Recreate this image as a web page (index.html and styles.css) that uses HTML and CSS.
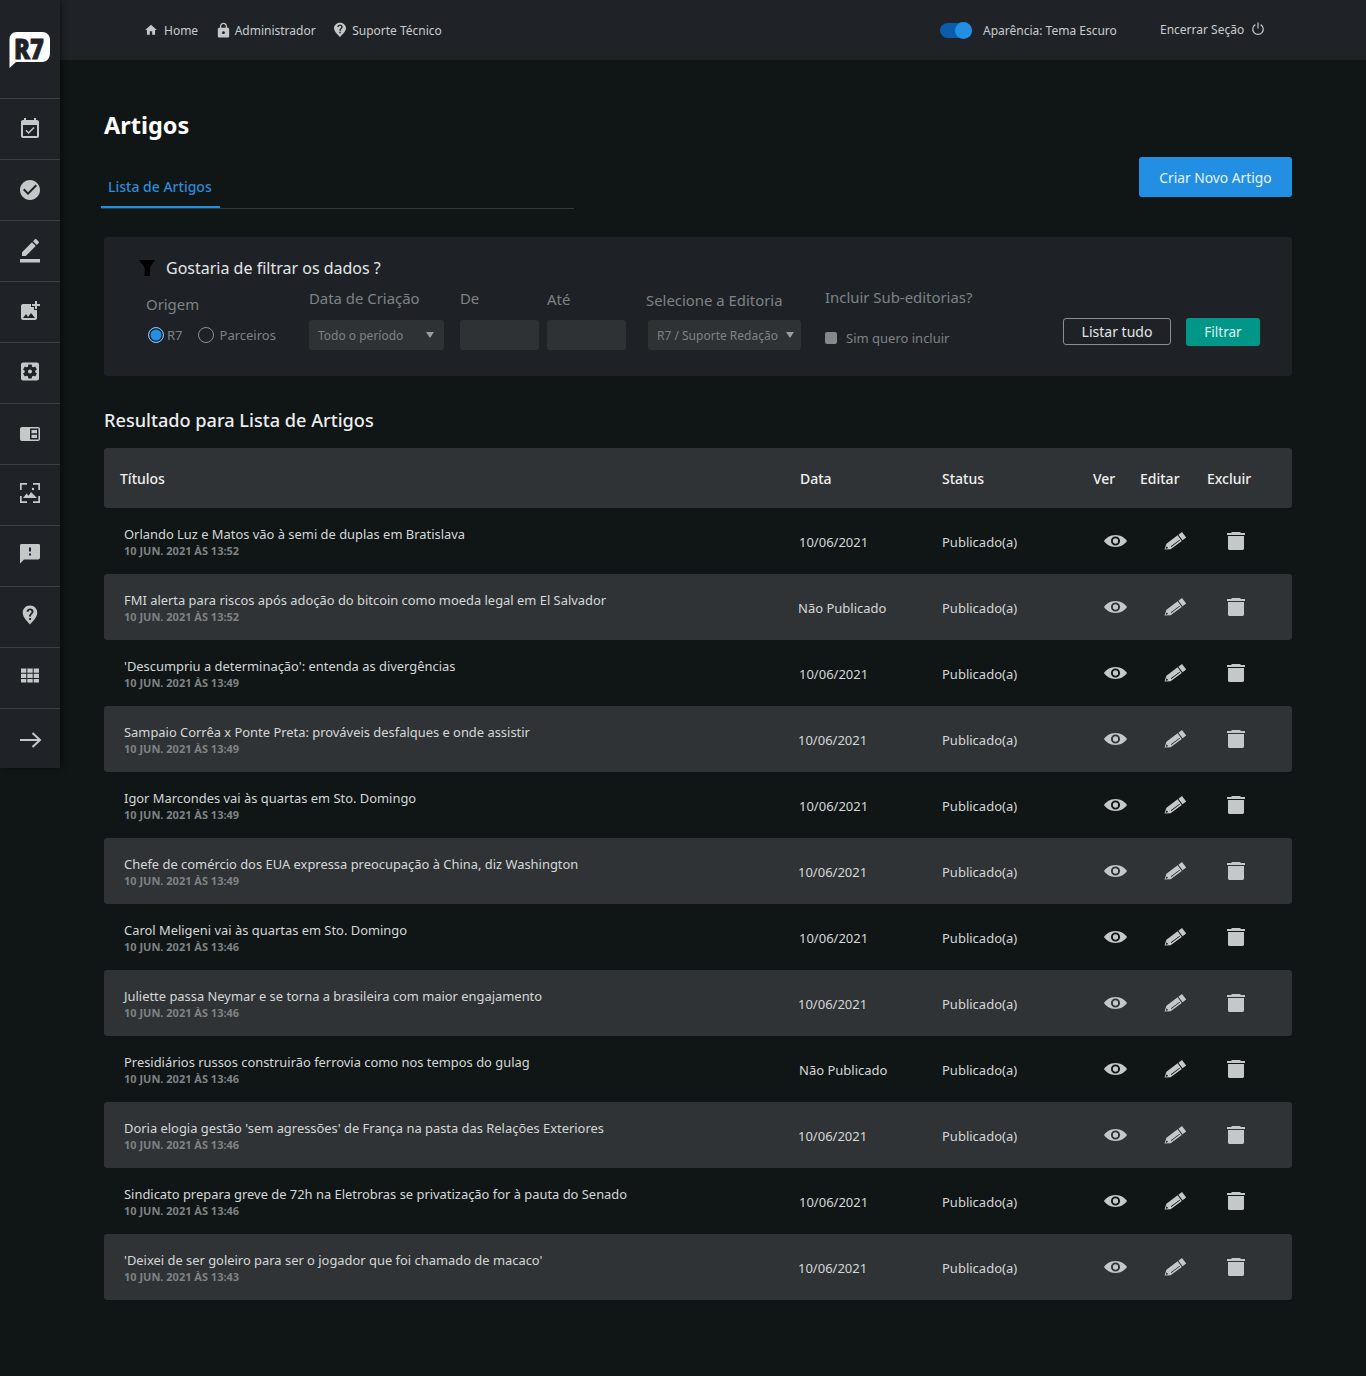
FILE: index.html
```html
<!DOCTYPE html>
<html lang="pt-BR">
<head>
<meta charset="utf-8">
<title>Artigos</title>
<link rel="stylesheet" href="styles.css">
</head>
<body>
<svg class="defs" width="0" height="0" aria-hidden="true">
  <symbol id="i-eye" viewBox="0 0 24 12.500"><path fill-rule="evenodd" d="M12 0C6.500 0 2.200 3 0 6.250c2.200 3.250 6.500 6.250 12 6.250s9.800-3 12-6.250C21.800 3 17.500 0 12 0zM12 1.500a4.750 4.750 0 1 1 0 9.500 4.750 4.750 0 0 1 0-9.500zM12 3.500a2.750 2.750 0 1 0 0 5.500 2.750 2.750 0 0 0 0-5.500z"/></symbol>
  <symbol id="i-pen" viewBox="0 0 22.500 18"><path fill-rule="evenodd" d="M.5 17.500L2.400 11.700 13.600 3.300 17.800 8.900 6.600 17.300zM1.600 16.900L2.600 14.200 4.200 15.900zM6.820 14.260L15.620 7.660 16.100 8.300 7.300 14.900zM14.400 2.700L18 0 22.200 5.600 18.600 8.300z"/></symbol>
  <symbol id="i-trash" viewBox="0 0 18 18"><path d="M5 0h8l1 1h4v2H0V1h4zM1 4h16v12.500c0 .8-.7 1.500-1.500 1.500h-13c-.8 0-1.500-.7-1.500-1.500z"/></symbol>
</svg>

<aside class="sidebar">
  <div class="side-logo">
    <svg class="logo" viewBox="0 0 42 36" width="42" height="36">
      <path class="logo-bubble" d="M8 0H33C38 0 41 3 41 8V21C41 26 38 30 33 30H7L.5 36V8C.5 3 3 0 8 0z"/>
      <text class="logo-text" x="5" y="26.500" textLength="30" lengthAdjust="spacingAndGlyphs">R7</text>
    </svg>
  </div>
  <div class="side-item"><svg viewBox="0 0 24 24"><path d="M16.530 11.060L15.470 10l-4.880 4.880-2.120-2.120-1.060 1.060L10.590 17l5.940-5.940zM19 3h-1V1h-2v2H8V1H6v2H5c-1.110 0-1.990.9-1.990 2L3 19c0 1.100.89 2 2 2h14c1.100 0 2-.9 2-2V5c0-1.100-.9-2-2-2zm0 16H5V8h14v11z"/></svg></div>
  <div class="side-item"><svg viewBox="0 0 24 24"><path d="M12 2C6.480 2 2 6.480 2 12s4.480 10 10 10 10-4.480 10-10S17.520 2 12 2zm-2 15l-5-5 1.410-1.410L10 14.170l7.590-7.590L19 8l-9 9z"/></svg></div>
  <div class="side-item"><svg viewBox="0 0 24 24"><path d="M17.750 7L14 3.250l-10 10V17h3.750l10-10zm2.960-2.960c.39-.39.39-1.020 0-1.410L18.370.29c-.39-.39-1.020-.39-1.410 0L15 2.250 18.750 6l1.960-1.960zM2 20h20v3.500H2z"/></svg></div>
  <div class="side-item"><svg viewBox="0 1 24 24"><path d="M19 7v2.990s-1.990.01-2 0V7h-3s.01-1.990 0-2h3V2h2v3h3v2h-3zm-3 4V8h-3V5H5c-1.100 0-2 .9-2 2v12c0 1.100.9 2 2 2h12c1.100 0 2-.9 2-2v-8h-3zM5 19l3-4 2 3 3-4 4 5H5z"/></svg></div>
  <div class="side-item"><svg viewBox="0 1.500 24 24"><path d="M12 10c-1.100 0-2 .9-2 2s.9 2 2 2 2-.9 2-2-.9-2-2-2zm7-7H5c-1.110 0-2 .9-2 2v14c0 1.100.89 2 2 2h14c1.110 0 2-.9 2-2V5c0-1.100-.89-2-2-2zm-1.750 9c0 .23-.02.46-.05.68l1.480 1.160c.13.11.17.3.08.45l-1.400 2.420c-.09.15-.27.21-.43.15l-1.740-.7c-.36.28-.76.51-1.180.69l-.26 1.850c-.03.17-.18.3-.35.3h-2.800c-.17 0-.32-.13-.35-.29l-.26-1.850c-.43-.18-.82-.41-1.180-.69l-1.740.7c-.16.06-.34 0-.43-.15l-1.400-2.420c-.09-.15-.05-.34.08-.45l1.480-1.160c-.03-.23-.05-.46-.05-.69 0-.23.02-.46.05-.68l-1.480-1.160c-.13-.11-.17-.3-.08-.45l1.400-2.420c.09-.15.27-.21.43-.15l1.740.7c.36-.28.76-.51 1.180-.69l.26-1.850c.03-.17.18-.3.35-.3h2.800c.17 0 .32.13.35.29l.26 1.850c.43.18.82.41 1.180.69l1.740-.7c.16-.06.34 0 .43.15l1.400 2.420c.09.15.05.34-.08.45l-1.480 1.160c.03.23.05.46.05.69z"/></svg></div>
  <div class="side-item"><svg viewBox="0 0 24 24"><path fill-rule="evenodd" d="M4 5h16c1.100 0 2 .9 2 2v10c0 1.100-.9 2-2 2H4c-1.100 0-2-.9-2-2V7c0-1.100.9-2 2-2zM12 6.500v11h8.500v-11zM13.500 8h5.500v3.300h-5.500zM13.500 12.700h5.500v3.300h-5.500z"/></svg></div>
  <div class="side-item"><svg viewBox="0 2 24 24"><path d="M2 2h7v1.700H3.700V9H2zM15 2h7v7h-1.700V3.700H15zM2 15h1.700v5.300H9V22H2zM20.300 15H22v7h-7v-1.700h5.300zM15 6.800a1.200 1.200 0 1 1 0 2.400 1.200 1.200 0 0 1 0-2.400zM5 17l3.600-4.600 2 2.300 2.400-3.700 6 6z"/></svg></div>
  <div class="side-item"><svg viewBox="0 2.500 24 24"><path d="M20 2H4c-1.100 0-1.990.9-1.990 2L2 22l4-4h14c1.100 0 2-.9 2-2V4c0-1.100-.9-2-2-2zm-7 12h-2v-2h2v2zm0-4h-2V6h2v4z"/></svg></div>
  <div class="side-item"><svg viewBox="-2 .33 28 28"><path fill-rule="evenodd" d="M12 1C6.800 1 3.500 4.800 3.500 9.500c0 5.300 6.300 11.300 8.500 13.500 2.200-2.200 8.500-8.200 8.500-13.500C20.500 4.800 17.200 1 12 1zM11 15.500h2.200v2.200H11zM12.100 4.500c2.400 0 4 1.500 4 3.500 0 2.800-3 3-3 5.800h-2.200c0-3.600 2.900-3.900 2.900-5.700 0-.9-.7-1.600-1.800-1.600-1 0-1.800.7-1.800 1.800H8c0-2.300 1.800-3.800 4.100-3.800z"/></svg></div>
  <div class="side-item"><svg viewBox="0 2.500 24 24"><path d="M3 5h5.300v4.300H3zM9.300 5h5.400v4.300H9.300zM15.700 5H21v4.300h-5.300zM3 10.300h5.300v4.300H3zM9.300 10.300h5.400v4.300H9.300zM15.700 10.300H21v4.300h-5.300zM3 15.600h5.300V19H3zM9.300 15.600h5.400V19H9.300zM15.700 15.600H21V19h-5.300z"/></svg></div>
  <div class="side-item side-arrow"><svg viewBox="0 -1 24 24"><path d="M2 12h20M14.500 5l7.500 7-7.500 7"/></svg></div>
</aside>

<div class="page">
  <header class="topbar">
    <nav class="topnav">
      <a class="nav-link link-home"><svg viewBox="0 0 24 24"><path d="M10 20v-6h4v6h5v-8h3L12 3 2 12h3v8z"/></svg>Home</a>
      <a class="nav-link link-lock"><svg viewBox="0 0 24 24"><path d="M18 8h-1V6c0-2.760-2.240-5-5-5S7 3.240 7 6v2H6c-1.100 0-2 .9-2 2v10c0 1.100.9 2 2 2h12c1.100 0 2-.9 2-2V10c0-1.100-.9-2-2-2zm-6 9c-1.100 0-2-.9-2-2s.9-2 2-2 2 .9 2 2-.9 2-2 2zm3.100-9H8.900V6c0-1.710 1.390-3.100 3.100-3.100 1.710 0 3.100 1.390 3.100 3.100v2z"/></svg>Administrador</a>
      <a class="nav-link link-help"><svg viewBox="0 0 24 24"><path fill-rule="evenodd" d="M12 1C6.800 1 3 4.800 3 9.500 3 14.800 9.500 19.500 12 23c2.500-3.500 9-8.200 9-13.500C21 4.800 17.200 1 12 1zM11 14.500h2.200v2.200H11zM12.100 3.800c2.400 0 4 1.500 4 3.500 0 2.800-3 3-3 5.800h-2.200c0-3.600 2.900-3.900 2.900-5.700 0-.9-.7-1.600-1.800-1.600-1 0-1.800.7-1.800 1.800H8c0-2.300 1.800-3.800 4.100-3.800z"/></svg>Suporte Técnico</a>
    </nav>
    <div class="theme">
      <span class="toggle"><span class="knob"></span></span>
      <span>Aparência: Tema Escuro</span>
    </div>
    <a class="logout">Encerrar Seção
      <svg viewBox="0 0 24 24" width="14" height="14"><path d="M7.500 4.500a9 9 0 1 0 9 0M12 1v10"/></svg>
    </a>
  </header>

  <main class="content">
    <h1 class="title">Artigos</h1>
    <div class="tabbar">
      <div class="tabs"><a class="tab">Lista de Artigos</a></div>
      <button class="btn-create">Criar Novo Artigo</button>
    </div>

    <section class="filter">
      <h2 class="filter-title">
        <svg viewBox="0 0 16 16" width="16" height="16"><path d="M0 0h16l-5 7.500V16H5.500V7.500z"/></svg>
        Gostaria de filtrar os dados ?
      </h2>
      <div class="filter-grid">
        <div class="col col-origin">
          <span class="lbl">Origem</span>
          <div class="radios">
            <label class="radio"><span class="dot on"></span>R7</label>
            <label class="radio radio-two"><span class="dot"></span>Parceiros</label>
          </div>
        </div>
        <div class="col col-date">
          <span class="lbl">Data de Criação</span>
          <div class="select sel-period"><span>Todo o período</span><i class="caret"></i></div>
        </div>
        <div class="col col-date">
          <span class="lbl">De</span>
          <div class="input"></div>
        </div>
        <div class="col col-ate">
          <span class="lbl">Até</span>
          <div class="input"></div>
        </div>
        <div class="col col-edit">
          <span class="lbl">Selecione a Editoria</span>
          <div class="select sel-edit"><span>R7 / Suporte Redação</span><i class="caret"></i></div>
        </div>
        <div class="col col-sub">
          <span class="lbl">Incluir Sub-editorias?</span>
          <label class="check"><span class="box"></span>Sim quero incluir</label>
        </div>
        <div class="col-actions">
          <button class="btn-outline">Listar tudo</button>
          <button class="btn-teal">Filtrar</button>
        </div>
      </div>
    </section>

    <h2 class="result">Resultado para Lista de Artigos</h2>

    <section class="table">
      <div class="thead">
        <span>Títulos</span><span>Data</span><span>Status</span><span>Ver</span><span>Editar</span><span>Excluir</span>
      </div>

      <div class="row">
        <div class="cell-title"><p class="t">Orlando Luz e Matos vão à semi de duplas em Bratislava</p><p class="m">10 JUN. 2021 ÀS 13:52</p></div>
        <span class="cell">10/06/2021</span><span class="cell">Publicado(a)</span>
        <svg class="a a-eye"><use href="#i-eye"/></svg><svg class="a a-pen"><use href="#i-pen"/></svg><svg class="a a-trash"><use href="#i-trash"/></svg>
      </div>
      <div class="row alt">
        <div class="cell-title"><p class="t">FMI alerta para riscos após adoção do bitcoin como moeda legal em El Salvador</p><p class="m">10 JUN. 2021 ÀS 13:52</p></div>
        <span class="cell">Não Publicado</span><span class="cell">Publicado(a)</span>
        <svg class="a a-eye"><use href="#i-eye"/></svg><svg class="a a-pen"><use href="#i-pen"/></svg><svg class="a a-trash"><use href="#i-trash"/></svg>
      </div>
      <div class="row">
        <div class="cell-title"><p class="t">'Descumpriu a determinação': entenda as divergências</p><p class="m">10 JUN. 2021 ÀS 13:49</p></div>
        <span class="cell">10/06/2021</span><span class="cell">Publicado(a)</span>
        <svg class="a a-eye"><use href="#i-eye"/></svg><svg class="a a-pen"><use href="#i-pen"/></svg><svg class="a a-trash"><use href="#i-trash"/></svg>
      </div>
      <div class="row alt">
        <div class="cell-title"><p class="t">Sampaio Corrêa x Ponte Preta: prováveis desfalques e onde assistir</p><p class="m">10 JUN. 2021 ÀS 13:49</p></div>
        <span class="cell">10/06/2021</span><span class="cell">Publicado(a)</span>
        <svg class="a a-eye"><use href="#i-eye"/></svg><svg class="a a-pen"><use href="#i-pen"/></svg><svg class="a a-trash"><use href="#i-trash"/></svg>
      </div>
      <div class="row">
        <div class="cell-title"><p class="t">Igor Marcondes vai às quartas em Sto. Domingo</p><p class="m">10 JUN. 2021 ÀS 13:49</p></div>
        <span class="cell">10/06/2021</span><span class="cell">Publicado(a)</span>
        <svg class="a a-eye"><use href="#i-eye"/></svg><svg class="a a-pen"><use href="#i-pen"/></svg><svg class="a a-trash"><use href="#i-trash"/></svg>
      </div>
      <div class="row alt">
        <div class="cell-title"><p class="t">Chefe de comércio dos EUA expressa preocupação à China, diz Washington</p><p class="m">10 JUN. 2021 ÀS 13:49</p></div>
        <span class="cell">10/06/2021</span><span class="cell">Publicado(a)</span>
        <svg class="a a-eye"><use href="#i-eye"/></svg><svg class="a a-pen"><use href="#i-pen"/></svg><svg class="a a-trash"><use href="#i-trash"/></svg>
      </div>
      <div class="row">
        <div class="cell-title"><p class="t">Carol Meligeni vai às quartas em Sto. Domingo</p><p class="m">10 JUN. 2021 ÀS 13:46</p></div>
        <span class="cell">10/06/2021</span><span class="cell">Publicado(a)</span>
        <svg class="a a-eye"><use href="#i-eye"/></svg><svg class="a a-pen"><use href="#i-pen"/></svg><svg class="a a-trash"><use href="#i-trash"/></svg>
      </div>
      <div class="row alt">
        <div class="cell-title"><p class="t">Juliette passa Neymar e se torna a brasileira com maior engajamento</p><p class="m">10 JUN. 2021 ÀS 13:46</p></div>
        <span class="cell">10/06/2021</span><span class="cell">Publicado(a)</span>
        <svg class="a a-eye"><use href="#i-eye"/></svg><svg class="a a-pen"><use href="#i-pen"/></svg><svg class="a a-trash"><use href="#i-trash"/></svg>
      </div>
      <div class="row">
        <div class="cell-title"><p class="t">Presidiários russos construirão ferrovia como nos tempos do gulag</p><p class="m">10 JUN. 2021 ÀS 13:46</p></div>
        <span class="cell">Não Publicado</span><span class="cell">Publicado(a)</span>
        <svg class="a a-eye"><use href="#i-eye"/></svg><svg class="a a-pen"><use href="#i-pen"/></svg><svg class="a a-trash"><use href="#i-trash"/></svg>
      </div>
      <div class="row alt">
        <div class="cell-title"><p class="t">Doria elogia gestão 'sem agressões' de França na pasta das Relações Exteriores</p><p class="m">10 JUN. 2021 ÀS 13:46</p></div>
        <span class="cell">10/06/2021</span><span class="cell">Publicado(a)</span>
        <svg class="a a-eye"><use href="#i-eye"/></svg><svg class="a a-pen"><use href="#i-pen"/></svg><svg class="a a-trash"><use href="#i-trash"/></svg>
      </div>
      <div class="row">
        <div class="cell-title"><p class="t">Sindicato prepara greve de 72h na Eletrobras se privatização for à pauta do Senado</p><p class="m">10 JUN. 2021 ÀS 13:46</p></div>
        <span class="cell">10/06/2021</span><span class="cell">Publicado(a)</span>
        <svg class="a a-eye"><use href="#i-eye"/></svg><svg class="a a-pen"><use href="#i-pen"/></svg><svg class="a a-trash"><use href="#i-trash"/></svg>
      </div>
      <div class="row alt">
        <div class="cell-title"><p class="t">'Deixei de ser goleiro para ser o jogador que foi chamado de macaco'</p><p class="m">10 JUN. 2021 ÀS 13:43</p></div>
        <span class="cell">10/06/2021</span><span class="cell">Publicado(a)</span>
        <svg class="a a-eye"><use href="#i-eye"/></svg><svg class="a a-pen"><use href="#i-pen"/></svg><svg class="a a-trash"><use href="#i-trash"/></svg>
      </div>
    </section>
  </main>
</div>
</body>
</html>
```

FILE: styles.css
```css
* { box-sizing: border-box; }
html, body { margin: 0; padding: 0; }
body {
  display: flex;
  min-height: 1376px;
  background: #101516;
  color: #c9cccd;
  font-family: "Noto Sans", "Open Sans", sans-serif;
  font-size: 13px;
}
.defs { display: block; width: 0; height: 0; }

/* sidebar */
.sidebar {
  flex: 0 0 60px;
  width: 60px;
  height: 768px;
  background: #1f2328;
  box-shadow: 2px 0 6px rgba(0, 0, 0, .45);
  display: flex;
  flex-direction: column;
  z-index: 2;
}
.side-logo { height: 98px; display: flex; justify-content: center; padding-top: 32px; }
.logo { overflow: visible; }
.logo-bubble { fill: #fff; }
.logo-text { font-family: "Noto Sans", sans-serif; font-weight: 900; font-size: 28.5px; fill: #1f2328; stroke: #1f2328; stroke-width: .8px; }
.side-item {
  height: 61px;
  border-top: 1px solid #3a3e42;
  display: flex;
  align-items: center;
  justify-content: center;
}
.side-item svg { fill: #c5c8c9; width: 24px; height: 24px; }
.side-item.side-arrow { height: 60px; }
.side-item.side-arrow svg { fill: none; stroke: #c5c8c9; stroke-width: 2; }

/* top */
.page { flex: 1; min-width: 0; display: flex; flex-direction: column; }
.topbar {
  height: 60px;
  background: #1f2328;
  display: flex;
  align-items: center;
  padding-left: 84px;
}
.topnav { display: flex; gap: 16.5px; width: 796px; }
.nav-link { display: flex; align-items: center; gap: 4px; font-size: 12px; color: #c9cccd; }
.nav-link svg { fill: #c5c8c9; width: 16px; height: 16px; }
.link-home { gap: 6px; }
.link-home svg { width: 14px; height: 14px; }
.link-lock { gap: 3px; }
.link-lock svg { width: 17px; height: 17px; }
.theme { display: flex; align-items: center; gap: 11px; font-size: 12px; width: 220px; }
.toggle { width: 32px; height: 15px; border-radius: 8px; background: #0b5cad; position: relative; display: block; }
.knob { position: absolute; right: 0; top: -1px; width: 17px; height: 17px; border-radius: 50%; background: #228fe3; }
.logout { display: flex; align-items: center; gap: 7px; font-size: 12px; position: relative; top: -1px; }
.logout svg { fill: none; stroke: #c5c8c9; stroke-width: 2; }

/* content */
.content { padding: 47px 74px 76px 44px; }
.title { margin: 0; font-size: 23.5px; line-height: 36px; font-weight: 700; color: #fff; }
.tabbar { display: flex; justify-content: space-between; align-items: flex-start; margin-top: 14px; }
.tabs { width: 473px; height: 52px; margin-left: -3px; border-bottom: 1px solid #33373a; display: flex; align-items: flex-end; }
.tab {
  width: 119px;
  height: 32px;
  padding: 2px 0 0 7px;
  line-height: 18px;
  font-size: 14px;
  font-weight: 500;
  color: #2c8cd6;
  border-bottom: 2px solid #228fe3;
}
.btn-create {
  width: 153px;
  height: 40px;
  border: 0;
  border-radius: 3px;
  background: #228fe3;
  color: #e8f3fb;
  font: 13.8px "Noto Sans", sans-serif;
}

/* filter */
.filter {
  margin-top: 28px;
  height: 139px;
  background: #1e2226;
  border-radius: 3px;
  padding: 20px 32px 0 35px;
}
.filter-title {
  margin: 0;
  display: flex;
  align-items: center;
  gap: 11px;
  font-size: 16px;
  line-height: 22px;
  font-weight: 400;
  color: #e4e6e6;
}
.filter-title svg { fill: #000; }
.filter-grid {
  display: grid;
  grid-template-columns: 163px 151px 87px 99px 179px 238px 197px;
  margin-left: 7px;
  margin-top: 10px;
}
.lbl { display: block; font-size: 14.9px; line-height: 20px; color: #7d8285; white-space: nowrap; }
.col-origin { padding-top: 5px; }
.col-date { margin-top: -1px; }
.col-edit { padding-top: 1px; }
.col-sub { margin-top: -2px; }
.radios { display: flex; align-items: center; margin-top: 11px; font-size: 13px; color: #7d8285; height: 20px; padding-left: 2px; }
.radio { display: flex; align-items: center; gap: 3px; }
.radio-two { margin-left: 15px; gap: 6px; }
.dot { width: 16px; height: 16px; border-radius: 50%; border: 1.5px solid #8a8f91; display: block; }
.dot.on { border-color: #8cc4ef; background: #228fe3; box-shadow: inset 0 0 0 1.5px #1e2226; }
.select, .input { height: 30px; border-radius: 3px; background: #2e3234; margin-top: 12px; }
.select { display: flex; align-items: center; font-size: 12px; color: #7d8285; padding: 0 10px 0 9px; justify-content: space-between; }
.sel-period { width: 135px; }
.sel-edit { width: 153px; margin-left: 2px; margin-top: 10px; padding-right: 7px; }
.input { width: 79px; }
.col-ate .input { margin-top: 11px; }
.caret { width: 0; height: 0; border-left: 4px solid transparent; border-right: 4px solid transparent; border-top: 6px solid #9a9ea0; display: block; }
.check { display: flex; align-items: center; gap: 9px; margin-top: 22px; font-size: 13px; color: #7d8285; }
.box { width: 12px; height: 12px; border-radius: 2px; background: #85898c; display: block; }
.col-actions { display: flex; align-items: flex-start; gap: 15px; padding-top: 29px; margin-top: 0; }
.btn-outline {
  width: 108px;
  height: 27px;
  border: 1px solid #8a8e90;
  border-radius: 3px;
  background: transparent;
  color: #e4e6e6;
  font: 14px "Noto Sans", sans-serif;
}
.btn-teal {
  width: 74px;
  height: 28px;
  border: 0;
  border-radius: 3px;
  background: #009688;
  color: #dff3f1;
  font: 13.5px "Noto Sans", sans-serif;
}

/* table */
.result { margin: 31px 0 14px; font-size: 18.15px; line-height: 27px; font-weight: 500; color: #eceeee; }
.thead {
  height: 60px;
  background: #2f3335;
  border-radius: 3px;
  padding-left: 16px;
  display: grid;
  grid-template-columns: 680px 142px 151px 47px 67px auto;
  align-items: center;
  font-size: 14px;
  font-weight: 500;
  color: #f0f1f1;
}
.row {
  height: 66px;
  display: grid;
  grid-template-columns: 695px 143px 143px 60px 61px 60px;
  align-items: center;
  padding-bottom: 1px;
}
.row.alt { background: #2f3335; border-radius: 3px; grid-template-columns: 694px 144px 143px 60px 61px 60px; }
.cell-title { padding: 3px 0 1px 20px; }
.t { margin: 0; font-size: 12.92px; line-height: 18px; color: #d5d8d8; white-space: nowrap; }
.m { margin: 0; font-size: 11px; line-height: 15px; font-weight: 700; color: #7d8285; white-space: nowrap; }
.cell { font-size: 13px; color: #d5d8d8; padding-top: 2px; }
.a { fill: #c5c8c9; justify-self: center; }
.a-eye { width: 23px; height: 12px; }
.a-pen { width: 22.5px; height: 18px; }
.a-trash { width: 18px; height: 18px; }
```
